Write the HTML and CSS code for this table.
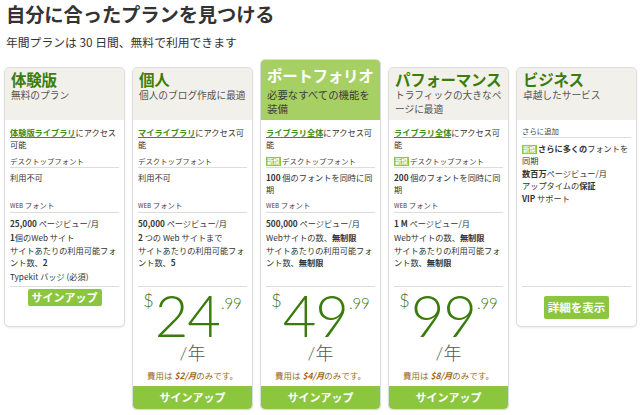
FILE: index.html
```html
<!DOCTYPE html>
<html lang="ja">
<head>
<meta charset="utf-8">
<title>プラン</title>
<link rel="stylesheet" href="styles.css">
</head>
<body>
<div class="page">
  <h1 class="title">自分に合ったプランを見つける</h1>
  <p class="lead">年間プランは 30 日間、無料で利用できます</p>

  <div class="plans">
    <div class="card">
      <div class="head">
        <h2 class="name">体験版</h2>
        <p class="sub">無料のプラン</p>
      </div>
      <div class="feat">
        <p class="access"><a class="lib">体験版ライブラリ</a>にアクセス<br>可能</p>
        <div class="desk">
          <h3 class="sec-h">デスクトップフォント</h3>
          <p class="item">利用不可</p>
        </div>
        <div class="web">
          <h3 class="sec-h"><span class="caps">WEB</span> フォント</h3>
          <p class="item"><b>25,000</b> ページビュー/月</p>
          <p class="item"><b>1</b>個のWeb サイト</p>
          <p class="item">サイトあたりの利用可能フォ<br>ント数、<b>2</b></p>
          <p class="item">Typekit バッジ (必須)</p>
        </div>
      </div>
      <div class="foot foot-free">
        <a class="btn">サインアップ</a>
      </div>
    </div>

    <div class="card">
      <div class="head">
        <h2 class="name">個人</h2>
        <p class="sub">個人のブログ作成に最適</p>
      </div>
      <div class="feat">
        <p class="access"><a class="lib">マイライブラリ</a>にアクセス可<br>能</p>
        <div class="desk">
          <h3 class="sec-h">デスクトップフォント</h3>
          <p class="item">利用不可</p>
        </div>
        <div class="web">
          <h3 class="sec-h"><span class="caps">WEB</span> フォント</h3>
          <p class="item"><b>50,000</b> ページビュー/月</p>
          <p class="item"><b>2</b> つの Web サイトまで</p>
          <p class="item">サイトあたりの利用可能フォ<br>ント数、<b>5</b></p>
        </div>
      </div>
      <div class="foot foot-paid">
        <div class="price"><span class="cur">$</span><span class="num">24</span><span class="cents">.99</span></div>
        <p class="per">/年</p>
        <p class="cost">費用は <b>$2/月</b>のみです。</p>
        <a class="btn-wide">サインアップ</a>
      </div>
    </div>

    <div class="card featured">
      <div class="head">
        <h2 class="name">ポートフォリオ</h2>
        <p class="sub">必要なすべての機能を<br>装備</p>
      </div>
      <div class="feat">
        <p class="access"><a class="lib">ライブラリ全体</a>にアクセス可<br>能</p>
        <div class="desk">
          <h3 class="sec-h"><span class="new">新規</span>デスクトップフォント</h3>
          <p class="item"><b>100</b> 個のフォントを同時に同<br>期</p>
        </div>
        <div class="web">
          <h3 class="sec-h"><span class="caps">WEB</span> フォント</h3>
          <p class="item"><b>500,000</b> ページビュー/月</p>
          <p class="item">Webサイトの数、<b>無制限</b></p>
          <p class="item">サイトあたりの利用可能フォ<br>ント数、<b>無制限</b></p>
        </div>
      </div>
      <div class="foot foot-paid">
        <div class="price"><span class="cur">$</span><span class="num">49</span><span class="cents">.99</span></div>
        <p class="per">/年</p>
        <p class="cost">費用は <b>$4/月</b>のみです。</p>
        <a class="btn-wide">サインアップ</a>
      </div>
    </div>

    <div class="card">
      <div class="head">
        <h2 class="name">パフォーマンス</h2>
        <p class="sub">トラフィックの大きなペ<br>ージに最適</p>
      </div>
      <div class="feat">
        <p class="access"><a class="lib">ライブラリ全体</a>にアクセス可<br>能</p>
        <div class="desk">
          <h3 class="sec-h"><span class="new">新規</span>デスクトップフォント</h3>
          <p class="item"><b>200</b> 個のフォントを同時に同<br>期</p>
        </div>
        <div class="web">
          <h3 class="sec-h"><span class="caps">WEB</span> フォント</h3>
          <p class="item"><b>1 M</b> ページビュー/月</p>
          <p class="item">Webサイトの数、<b>無制限</b></p>
          <p class="item">サイトあたりの利用可能フォ<br>ント数、<b>無制限</b></p>
        </div>
      </div>
      <div class="foot foot-paid">
        <div class="price"><span class="cur">$</span><span class="num">99</span><span class="cents">.99</span></div>
        <p class="per">/年</p>
        <p class="cost">費用は <b>$8/月</b>のみです。</p>
        <a class="btn-wide">サインアップ</a>
      </div>
    </div>

    <div class="card">
      <div class="head">
        <h2 class="name">ビジネス</h2>
        <p class="sub">卓越したサービス</p>
      </div>
      <div class="feat">
        <div class="extra">
          <h3 class="sec-h">さらに追加</h3>
          <p class="item"><span class="new">新規</span><b>さらに多くの</b>フォントを<br>同期</p>
          <p class="item"><b>数百万</b>ページビュー/月</p>
          <p class="item">アップタイムの<b>保証</b></p>
          <p class="item"><b>VIP</b> サポート</p>
        </div>
      </div>
      <div class="foot foot-biz">
        <a class="btn btn-biz">詳細を表示</a>
      </div>
    </div>
  </div>
</div>
</body>
</html>
```

FILE: styles.css
```css
* {
  box-sizing: border-box;
}

html, body {
  margin: 0;
  padding: 0;
  background: #ffffff;
}

body {
  font-family: "Noto Sans CJK JP", sans-serif;
  color: #333333;
}

.page {
  padding: 3px 3px 0 4px;
}

.title {
  margin: 0 0 0 2px;
  font-size: 19.3px;
  line-height: 22px;
  font-weight: bold;
  color: #333333;
  letter-spacing: -0.1px;
}

.lead {
  margin: 10px 0 0 2px;
  font-size: 11.8px;
  line-height: 14px;
  color: #333333;
}

.plans {
  margin-top: 10px;
  display: grid;
  grid-template-columns: repeat(5, 121px);
  column-gap: 7px;
  align-items: start;
}

.card {
  margin-top: 8px;
  border: 1px solid #dcdcdc;
  border-radius: 5px;
  background: #ffffff;
  box-shadow: 0 1px 2px rgba(0, 0, 0, 0.08);
  overflow: hidden;
}

.card.featured {
  margin-top: 0;
}

.head {
  height: 52px;
  padding: 2px 6px 0 6px;
  background: #f2f0ea;
}

.featured .head {
  height: 60px;
  padding-top: 6px;
  background: #a6d064;
}

.name {
  margin: 0;
  font-size: 15.5px;
  line-height: 18px;
  font-weight: bold;
  color: #3b7d0c;
  letter-spacing: -0.3px;
  white-space: nowrap;
}

.featured .name {
  color: #ffffff;
}

.sub {
  margin: 0;
  font-size: 9.7px;
  line-height: 14px;
  color: #555555;
}

.featured .sub {
  margin-top: 4px;
  font-size: 10.4px;
  color: #3d3d3d;
}

.feat {
  height: 167px;
  margin: 0 5px;
  padding-top: 6px;
  border-bottom: 1px solid #dddddd;
  font-size: 8.2px;
  line-height: 12px;
}

.feat p {
  margin: 0;
}

.access {
  height: 24px;
}

.lib {
  color: #3f8d16;
  font-weight: bold;
  text-decoration: underline;
}

.desk {
  height: 44px;
  margin-top: 5px;
}

.sec-h {
  margin: 0;
  padding-bottom: 1px;
  border-bottom: 1px solid #dddddd;
  font-size: 7.4px;
  line-height: 11px;
  font-weight: normal;
  color: #444444;
}

.caps {
  font-size: 6.2px;
}

.new {
  display: inline-block;
  margin-right: 1.5px;
  padding: 0 1px;
  background: #8cc63f;
  color: #ffffff;
  font-size: 6.3px;
  line-height: 9px;
  font-weight: bold;
  vertical-align: 0.5px;
}

.item {
  color: #333333;
}

.desk .item {
  margin-top: 3px;
}

.web .sec-h {
  margin-bottom: 4px;
}

.web .item {
  margin-bottom: 1.5px;
}

.extra .sec-h {
  margin-top: -1px;
  margin-bottom: 4px;
}

.extra .item {
  margin-bottom: 0.5px;
}

.foot {
  text-align: center;
}

.foot-free {
  display: flex;
  justify-content: center;
  padding: 2px 0 20px;
}

.foot-biz {
  display: flex;
  justify-content: center;
  padding: 9px 0 7px;
}

.btn {
  display: block;
  height: 17px;
  padding: 0 4px;
  background: #8cc63f;
  color: #ffffff;
  font-size: 11px;
  line-height: 17px;
  font-weight: bold;
  border-radius: 2px;
}

.btn-biz {
  height: 23px;
  line-height: 23px;
  font-size: 11.5px;
  padding: 0 4px;
}

.price {
  display: flex;
  justify-content: center;
  align-items: flex-start;
  height: 48px;
  margin-top: 4px;
  font-family: "Lato", "Liberation Sans", sans-serif;
  font-weight: 300;
  color: #3b7a0c;
}

.cur {
  font-size: 18px;
  line-height: 18px;
  margin-right: 1px;
}

.num {
  font-size: 58px;
  line-height: 48px;
  letter-spacing: -1px;
}

.cents {
  font-size: 15px;
  line-height: 15px;
  margin-top: 5px;
  margin-left: 1px;
}

.per {
  margin: 4px 0 0;
  font-family: "Lato", "Noto Sans CJK JP", sans-serif;
  font-weight: 300;
  font-size: 18px;
  line-height: 20px;
  color: #555555;
}

.cost {
  margin: 6px 0 0;
  font-size: 8.5px;
  line-height: 12px;
  color: #a0691c;
}

.cost b {
  font-style: italic;
}

.btn-wide {
  display: block;
  margin-top: 5px;
  height: 23px;
  background: #8cc63f;
  color: #ffffff;
  font-size: 11px;
  line-height: 23px;
  font-weight: bold;
  border-radius: 0 0 4px 4px;
}
```
